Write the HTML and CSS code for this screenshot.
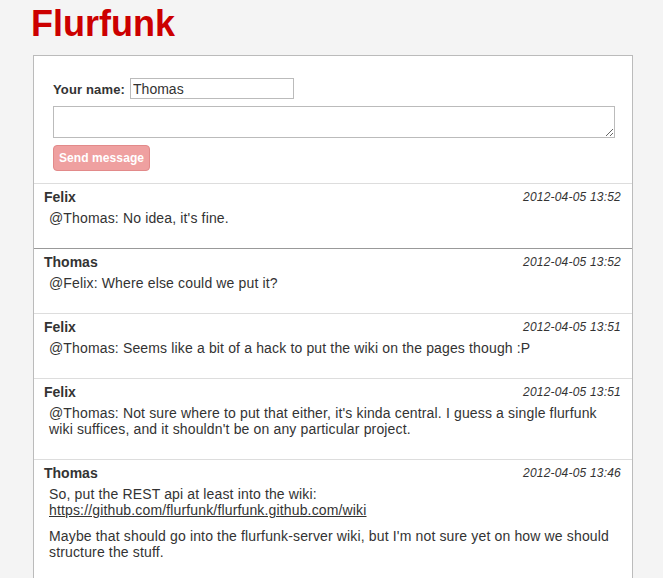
FILE: index.html
```html
<!DOCTYPE html>
<html>
<head>
<meta charset="utf-8">
<title>Flurfunk</title>
<link rel="stylesheet" href="styles.css">
</head>
<body>
<div class="page">
  <h1 class="title">Flurfunk</h1>
  <div class="panel">
    <form class="composer">
      <div class="name-row">
        <label class="name-label" for="name">Your name:</label>
        <input class="name-input" id="name" type="text" value="Thomas">
      </div>
      <textarea class="message-input"></textarea>
      <button class="send-button" type="button">Send message</button>
    </form>
    <div class="messages">
      <div class="message">
        <div class="message-head"><span class="author">Felix</span><span class="date">2012-04-05 13:52</span></div>
        <div class="message-body"><p>@Thomas: No idea, it's fine.</p></div>
      </div>
      <div class="message message-seen">
        <div class="message-head"><span class="author">Thomas</span><span class="date">2012-04-05 13:52</span></div>
        <div class="message-body"><p>@Felix: Where else could we put it?</p></div>
      </div>
      <div class="message">
        <div class="message-head"><span class="author">Felix</span><span class="date">2012-04-05 13:51</span></div>
        <div class="message-body"><p>@Thomas: Seems like a bit of a hack to put the wiki on the pages though :P</p></div>
      </div>
      <div class="message">
        <div class="message-head"><span class="author">Felix</span><span class="date">2012-04-05 13:51</span></div>
        <div class="message-body"><p>@Thomas: Not sure where to put that either, it's kinda central. I guess a single flurfunk wiki suffices, and it shouldn't be on any particular project.</p></div>
      </div>
      <div class="message">
        <div class="message-head"><span class="author">Thomas</span><span class="date">2012-04-05 13:46</span></div>
        <div class="message-body">
          <p>So, put the REST api at least into the wiki:<br><a href="#">https://github.com/flurfunk/flurfunk.github.com/wiki</a></p>
          <p>Maybe that should go into the flurfunk-server wiki, but I'm not sure yet on how we should structure the stuff.</p>
        </div>
      </div>
    </div>
  </div>
</div>
</body>
</html>
```

FILE: styles.css
```css
html, body {
  margin: 0;
  padding: 0;
  background: #f4f4f4;
  font-family: "Liberation Sans", Arial, sans-serif;
  color: #333;
}

.page {
  width: 600px;
  margin-left: 33px;
}

.title {
  margin: 3px 0 10px -2px;
  font-size: 36px;
  font-weight: bold;
  line-height: normal;
  color: #cc0000;
}

.panel {
  box-sizing: border-box;
  background: #fff;
  border: 1px solid #bbb;
  border-bottom: none;
}

.composer {
  margin: 0;
  padding: 22px 0 12px 19px;
}

.name-row {
  display: flex;
  align-items: baseline;
  gap: 5px;
}

.name-label {
  font-size: 13px;
  font-weight: bold;
  letter-spacing: 0.15px;
  color: #333;
}

.name-input {
  box-sizing: border-box;
  width: 164px;
  height: 21px;
  margin: 0;
  padding: 1px 2px;
  border: 1px solid #bbb;
  font-family: "Liberation Sans", Arial, sans-serif;
  font-size: 14px;
  color: #333;
  outline: none;
}

.message-input {
  display: block;
  box-sizing: border-box;
  width: 562px;
  height: 32px;
  margin: 7px 0 0 0;
  padding: 2px;
  border: 1px solid #bbb;
  font-family: "Liberation Sans", Arial, sans-serif;
  font-size: 14px;
  outline: none;
}

.send-button {
  display: block;
  box-sizing: border-box;
  width: 97px;
  height: 26px;
  margin: 7px 0 0 0;
  padding: 0;
  background: #efa0a0;
  border: 1px solid #e28a8a;
  border-radius: 4px;
  color: #fff;
  font-family: "Liberation Sans", Arial, sans-serif;
  font-size: 12px;
  font-weight: bold;
  letter-spacing: 0.1px;
}

.message {
  border-top: 1px solid #ddd;
  padding: 5px 11px 12px 10px;
}

.message-seen {
  border-top-color: #999;
}

.message-head {
  display: flex;
  justify-content: space-between;
  align-items: flex-start;
}

.author {
  font-size: 14px;
  line-height: 16px;
  font-weight: bold;
  color: #333;
}

.date {
  font-size: 12px;
  font-style: italic;
  line-height: 14px;
  letter-spacing: 0.2px;
  margin-top: 1px;
  color: #333;
}

.message-body {
  padding-left: 5px;
  font-size: 14px;
  line-height: 16px;
  letter-spacing: 0.15px;
}

.message-body p {
  margin: 5px 0 10px 0;
}

.message-body a {
  color: #333;
  text-decoration: underline;
}
```
